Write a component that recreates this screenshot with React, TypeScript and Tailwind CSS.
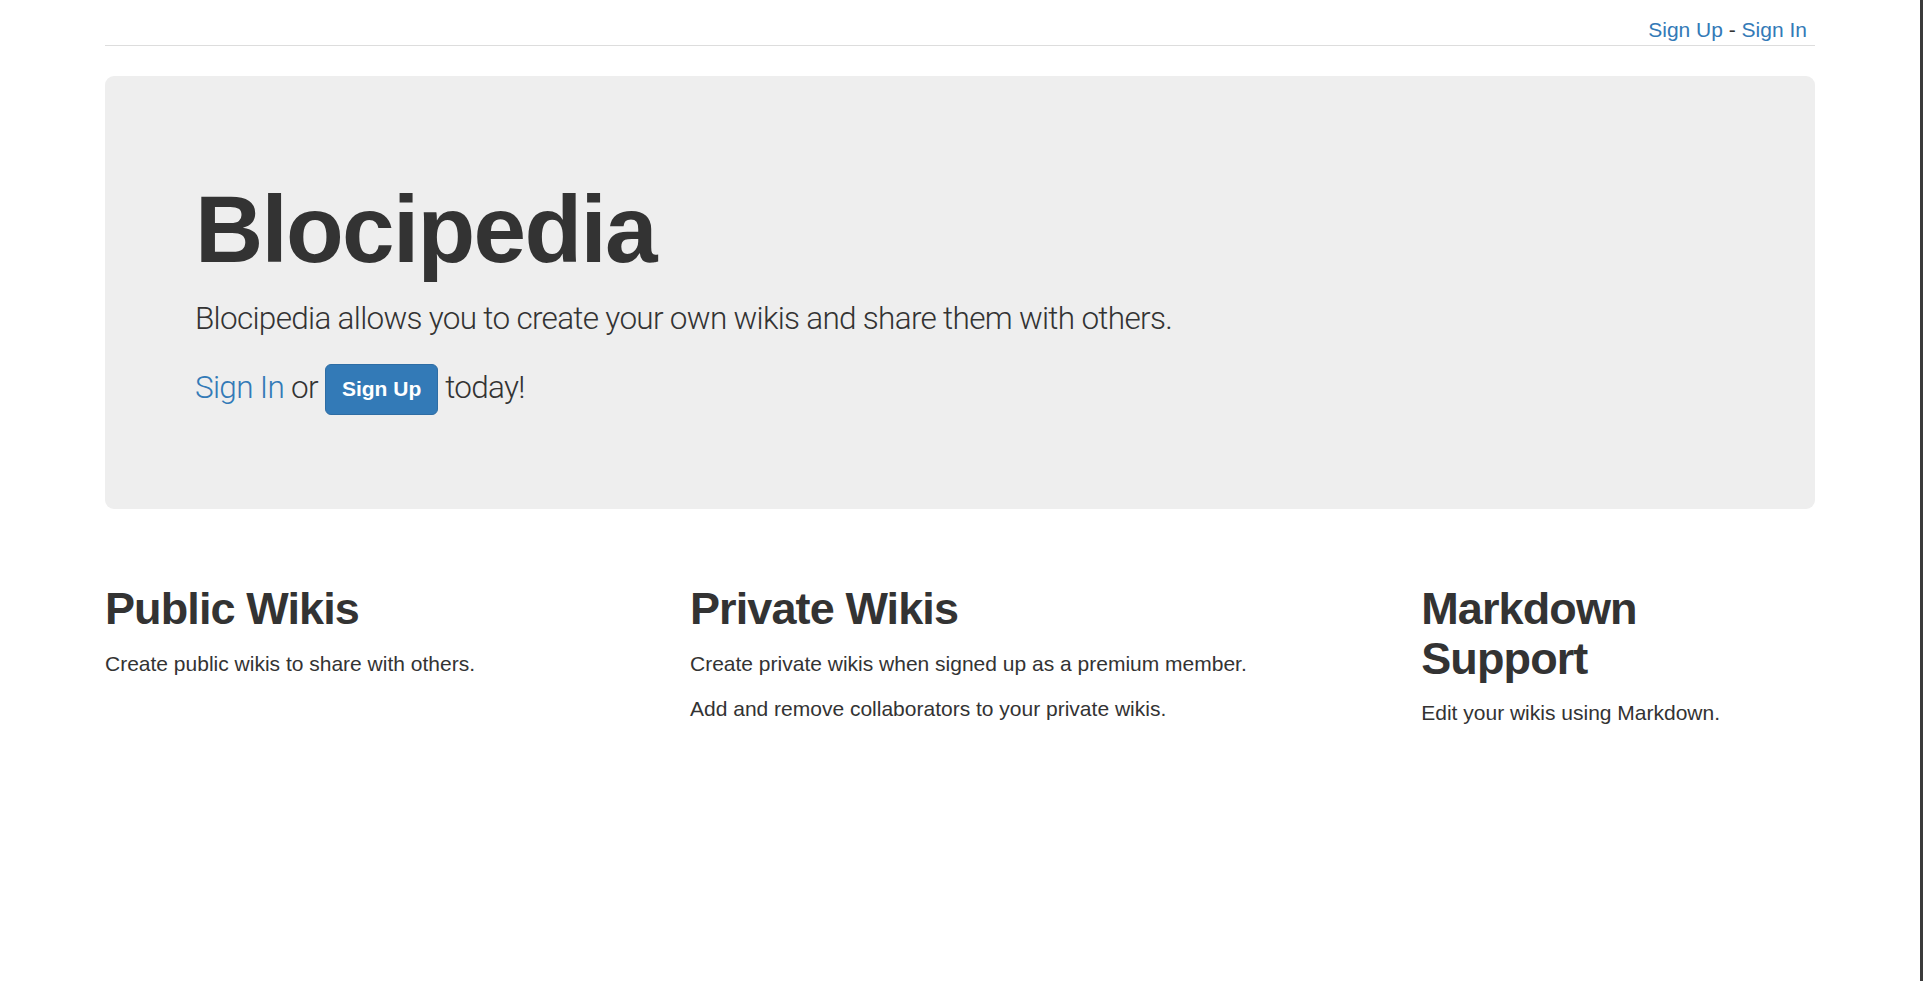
import React from 'react';

const features = [
    {
        title: ['Public Wikis'],
        lines: ['Create public wikis to share with others.'],
        width: 'w-[585px]',
    },
    {
        title: ['Private Wikis'],
        lines: [
            'Create private wikis when signed up as a premium member.',
            'Add and remove collaborators to your private wikis.',
        ],
        width: 'w-[731.25px]',
    },
    {
        title: ['Markdown', 'Support'],
        lines: ['Edit your wikis using Markdown.'],
        width: 'w-[438.75px]',
    },
];

const App: React.FC = () => {
    return (
        <div className="flex min-h-screen bg-white font-['Liberation_Sans',Arial,sans-serif] text-[21px] leading-[30px] text-[#333]">
            <div className="flex-1">
                <div className="mx-auto w-[1755px] px-[22.5px]">

                    {/* Top links */}
                    <nav className="flex justify-end border-b-[1.5px] border-[#dddddd] pt-[14.5px] pr-2">
                        <a href="#" className="text-[#337ab7]">Sign Up</a>
                        <span className="whitespace-pre"> - </span>
                        <a href="#" className="text-[#337ab7]">Sign In</a>
                    </nav>

                    {/* Jumbotron */}
                    <section className="mt-[30px] rounded-[9px] bg-[#eeeeee] px-[90px] py-[72px]">
                        <h1 className="mt-[30px] mb-[15px] text-[94.5px] leading-[1.1] font-bold tracking-[-0.018em]">
                            Blocipedia
                        </h1>
                        <div className="font-['Roboto',sans-serif] text-[31.5px] leading-[45px] font-light tracking-[-0.7px]">
                            <p className="mb-[22.5px]">
                                Blocipedia allows you to create your own wikis and share them with others.
                            </p>
                            <p className="mb-[22.5px]">
                                <a href="#" className="text-[#337ab7]">Sign In</a> or{' '}
                                <button className="inline-block h-[51px] cursor-pointer rounded-[6px] border-[1.5px] border-[#2e6da4] bg-[#337ab7] px-[16px] align-middle font-['Liberation_Sans',Arial,sans-serif] text-[21px] leading-[30px] font-bold tracking-normal text-white">
                                    Sign Up
                                </button>{' '}
                                today!
                            </p>
                        </div>
                    </section>

                    {/* Features */}
                    <div className="-mx-[22.5px] mt-[45px] flex">
                        {features.map((f) => (
                            <div key={f.title.join(' ')} className={`${f.width} px-[22.5px]`}>
                                <h2 className="mt-[30px] mb-[15px] text-[45px] leading-[1.1] font-bold tracking-[-0.02em]">
                                    {f.title.map((t, i) => (
                                        <React.Fragment key={t}>
                                            {i > 0 && <br />}
                                            {t}
                                        </React.Fragment>
                                    ))}
                                </h2>
                                {f.lines.map((l) => (
                                    <p key={l} className="mb-[15px]">{l}</p>
                                ))}
                            </div>
                        ))}
                    </div>

                </div>
            </div>
            <div className="w-[3px] bg-[#3b3b3b]" />
        </div>
    );
};

export default App;
